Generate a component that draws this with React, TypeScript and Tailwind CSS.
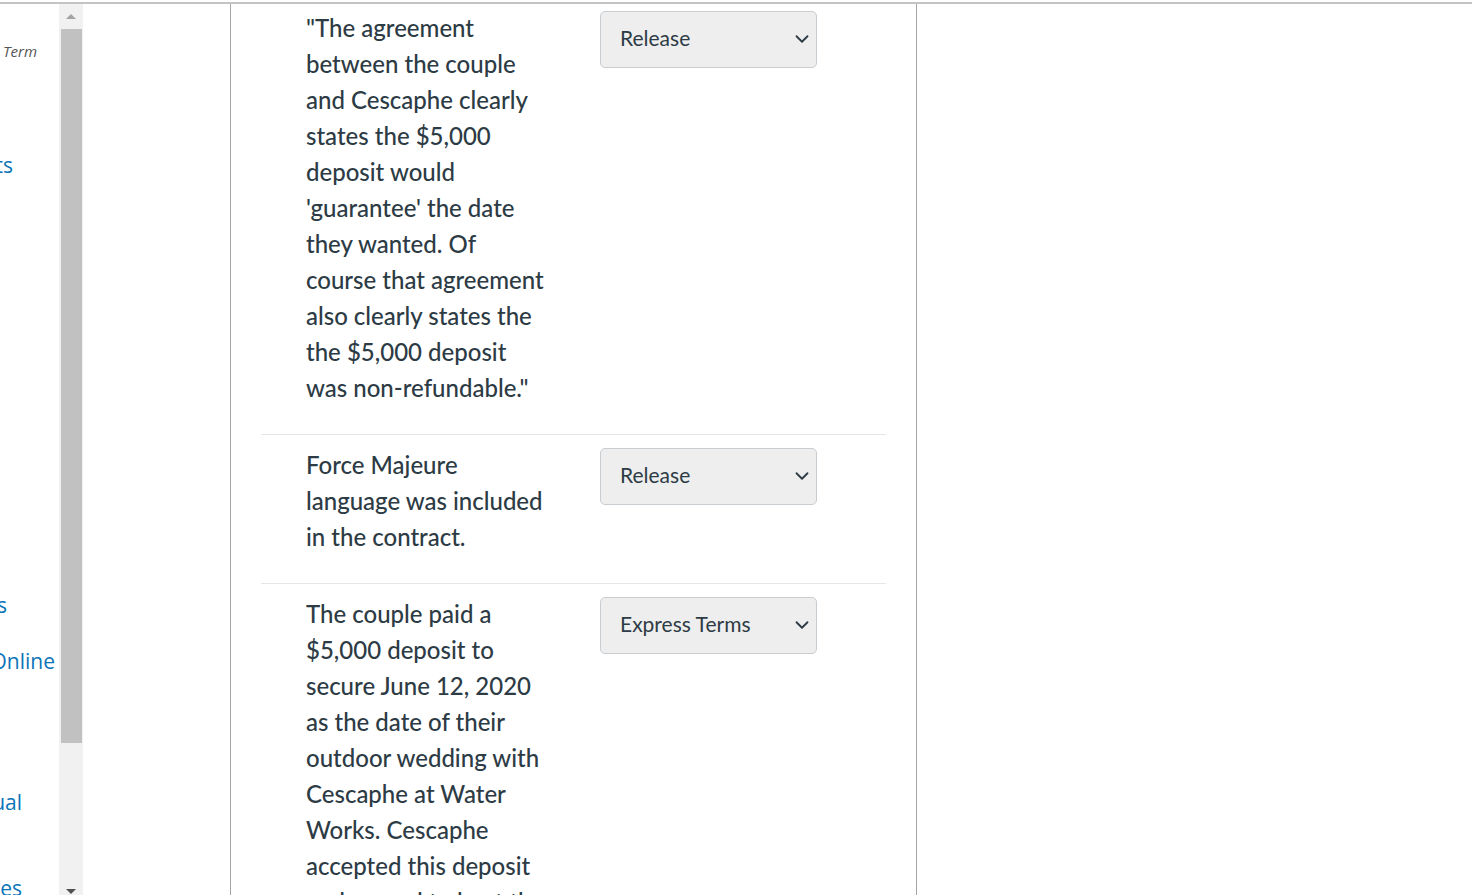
import { ChevronDown } from "lucide-react";

type Row = { text: string; value: string };

const rows: Row[] = [
  {
    text: "\"The agreement between the couple and Cescaphe clearly states the $5,000 deposit would 'guarantee' the date they wanted. Of course that agreement also clearly states the the $5,000 deposit was non-refundable.\"",
    value: "Release",
  },
  { text: "Force Majeure language was included in the contract.", value: "Release" },
  {
    text: "The couple paid a $5,000 deposit to secure June 12, 2020 as the date of their outdoor wedding with Cescaphe at Water Works. Cescaphe accepted this deposit and agreed to host the wedding on that date.",
    value: "Express Terms",
  },
];

const options = ["[ Choose ]", "Release", "Express Terms", "Implied Terms", "Frustration", "Breach"];

const SideItem = ({ label, end, mt, className }: { label: string; end: number; mt: number; className: string }) => (
  <div className="flex justify-end whitespace-nowrap" style={{ width: end, marginTop: mt }}>
    <span className={className}>{label}</span>
  </div>
);

const MatchRow = ({ row }: { row: Row }) => (
  <div className="flex border-b border-[#e4e6e8] pt-[12px] pb-[28px] pl-[45px]">
    <div className="w-[244px] text-[24px] font-medium leading-[36px] text-[#2d3b45]">{row.text}</div>
    <div className="relative mt-[1px] ml-[50px] h-[57px] w-[217px] shrink-0">
      <select
        defaultValue={row.value}
        className="h-full w-full appearance-none rounded-[5px] border border-[#c7cdd1] bg-[#eeeeee] pb-[3px] pl-[19px] text-[21px] text-[#2d3b45] outline-none"
        style={{ fontFamily: "Lato, sans-serif" }}
      >
        {options.map((o) => (
          <option key={o}>{o}</option>
        ))}
      </select>
      <ChevronDown className="pointer-events-none absolute right-[4px] top-[17px] h-[22px] w-[22px] text-[#2d3b45]" strokeWidth={2} />
    </div>
  </div>
);

export default function App() {
  return (
    <div className="h-[895px] w-[1472px] overflow-hidden bg-white pt-[2px]" style={{ fontFamily: "Lato, sans-serif" }}>
      <div className="flex h-full border-t-2 border-[#c3c3c3]">
        {/* clipped course nav */}
        <div className="flex w-[59px] shrink-0 flex-col overflow-hidden" style={{ fontFamily: "'Open Sans', sans-serif" }}>
          <SideItem label="Spring Term" end={37} mt={37} className="text-[15px] italic leading-[20px] text-[#555]" />
          <SideItem label="Assignments" end={13} mt={90} className="text-[21px] leading-[28px] text-[#0b74b8]" />
          <SideItem label="Quizzes" end={7} mt={412} className="text-[21px] leading-[28px] text-[#0b74b8]" />
          <SideItem label="Office 365 Online" end={55} mt={28} className="text-[21px] leading-[28px] text-[#0b74b8]" />
          <SideItem label="Student Manual" end={22} mt={113} className="text-[21px] leading-[28px] text-[#0b74b8]" />
          <SideItem label="Resources" end={22} mt={58} className="text-[21px] leading-[28px] text-[#0b74b8]" />
        </div>

        {/* scrollbar */}
        <div className="flex w-[24px] shrink-0 flex-col items-center bg-[#f1f1f1]">
          <div className="mt-[10px] h-0 w-0 border-x-[5px] border-b-[5px] border-x-transparent border-b-[#a3a3a3]" />
          <div className="mt-[10px] h-[714px] w-[21px] bg-[#c1c1c1]" />
          <div className="mt-auto mb-[1px] h-0 w-0 border-x-[5px] border-t-[5px] border-x-transparent border-t-[#505050]" />
        </div>

        <div className="w-[147px] shrink-0" />

        {/* question body */}
        <div className="w-[687px] shrink-0 border-x border-[#a6a6a6] px-[30px]">
          <div className="-mt-[6px]">
            {rows.map((r, i) => (
              <MatchRow key={i} row={r} />
            ))}
          </div>
        </div>

        <div className="flex-1" />
      </div>
    </div>
  );
}
